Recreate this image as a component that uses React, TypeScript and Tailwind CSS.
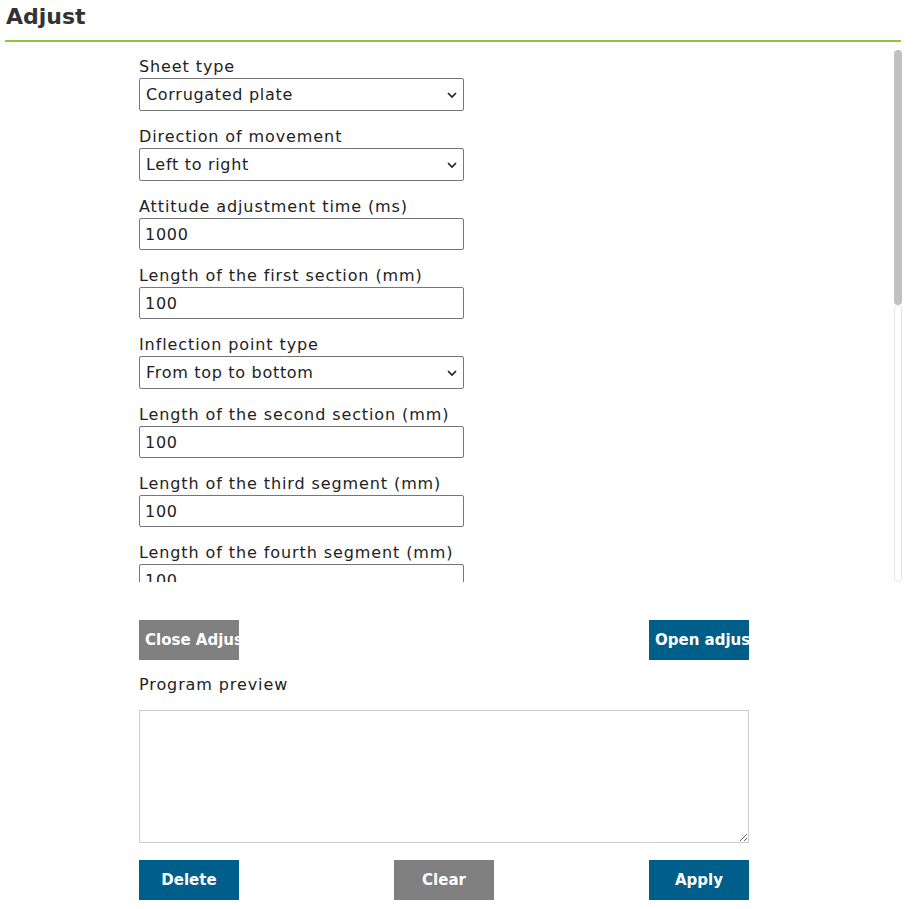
import { useState } from "react";

type Field = {
  label: string;
  kind: "select" | "input";
  value: string;
  options?: string[];
};

const fields: Field[] = [
  { label: "Sheet type", kind: "select", value: "Corrugated plate", options: ["Corrugated plate", "Flat plate"] },
  { label: "Direction of movement", kind: "select", value: "Left to right", options: ["Left to right", "Right to left"] },
  { label: "Attitude adjustment time (ms)", kind: "input", value: "1000" },
  { label: "Length of the first section (mm)", kind: "input", value: "100" },
  { label: "Inflection point type", kind: "select", value: "From top to bottom", options: ["From top to bottom", "From bottom to top"] },
  { label: "Length of the second section (mm)", kind: "input", value: "100" },
  { label: "Length of the third segment (mm)", kind: "input", value: "100" },
  { label: "Length of the fourth segment (mm)", kind: "input", value: "100" },
  { label: "Length of the fifth segment (mm)", kind: "input", value: "100" },
  { label: "Length of the sixth segment (mm)", kind: "input", value: "100" },
  { label: "Height of the wave (mm)", kind: "input", value: "20" },
  { label: "Spray speed (mm/s)", kind: "input", value: "300" },
  { label: "Spray gun height (mm)", kind: "input", value: "150" },
  { label: "Number of passes", kind: "input", value: "1" },
  { label: "Start delay (ms)", kind: "input", value: "0" },
  { label: "End delay (ms)", kind: "input", value: "0" },
];

const Chevron = () => (
  <svg
    className="pointer-events-none absolute right-[7px] top-1/2 -translate-y-1/2"
    width="10"
    height="6"
    viewBox="0 0 10 6"
    fill="none"
  >
    <path d="M1 1l4 4 4-4" stroke="#222" strokeWidth="1.7" />
  </svg>
);

export default function App() {
  const [values, setValues] = useState<string[]>(fields.map((f) => f.value));
  const [preview, setPreview] = useState("");

  const update = (i: number, v: string) =>
    setValues((prev) => prev.map((p, idx) => (idx === i ? v : p)));

  return (
    <div className="w-[916px] h-[909px] bg-white text-[#222] font-['DejaVu_Sans',Verdana,sans-serif] overflow-hidden">
      <div className="mx-[5px] w-[896px]">
        <h1 className="pl-[1px] h-[40px] pt-[2px] text-[22px] leading-[30px] font-bold text-[#333]">Adjust</h1>
        <div className="h-[2px] bg-[#8cc63f]" />
      </div>

      <div className="ml-[5px] mt-[8px] w-[897px] h-[532px] flex">
        <div className="flex-1 h-full overflow-hidden">
          <div className="pl-[134px] pt-[6px] flex flex-col gap-[15px]">
            {fields.map((f, i) => (
              <label key={f.label} className="flex flex-col w-[325px]">
                <span className="text-[16px] leading-[22px] tracking-[0.9px] whitespace-nowrap">{f.label}</span>
                {f.kind === "select" ? (
                  <div className="relative">
                    <select
                      value={values[i]}
                      onChange={(e) => update(i, e.target.value)}
                      className="appearance-none w-full h-[33px] border border-[#767676] rounded-[2px] pl-[6px] pr-[24px] text-[16px] tracking-[0.7px] bg-white text-[#222] outline-none"
                    >
                      {f.options?.map((o) => (
                        <option key={o}>{o}</option>
                      ))}
                    </select>
                    <Chevron />
                  </div>
                ) : (
                  <input
                    value={values[i]}
                    onChange={(e) => update(i, e.target.value)}
                    className="w-full h-[32px] border border-[#767676] rounded-[2px] px-[5px] text-[16px] tracking-[0.7px] bg-white text-[#222] outline-none"
                  />
                )}
              </label>
            ))}
          </div>
        </div>
        <div className="w-[8px] h-full flex flex-col">
          <div className="h-[255px] rounded-[4px] bg-[#c1c1c1]" />
          <div className="flex-1 rounded-[4px] border border-[#e4e4e4]" />
        </div>
      </div>

      <div className="ml-[139px] w-[610px] mt-[38px]">
        <div className="flex justify-between">
          <button className="w-[100px] h-[40px] bg-[#808080] text-white text-[15px] font-bold whitespace-nowrap overflow-hidden text-left pl-[6px]">
            Close Adjust
          </button>
          <button className="w-[100px] h-[40px] bg-[#005e8a] text-white text-[15px] font-bold whitespace-nowrap overflow-hidden text-left pl-[6px]">
            Open adjust
          </button>
        </div>
        <div className="mt-[14px] text-[16px] leading-[22px] tracking-[0.9px]">Program preview</div>
        <textarea
          value={preview}
          onChange={(e) => setPreview(e.target.value)}
          className="mt-[14px] block w-[610px] h-[133px] border border-[#cfcfcf] outline-none resize-y p-[4px] text-[15px]"
        />
        <div className="mt-[17px] flex justify-between">
          <button className="w-[100px] h-[40px] bg-[#005e8a] text-white text-[15px] font-bold">Delete</button>
          <button className="w-[100px] h-[40px] bg-[#808080] text-white text-[15px] font-bold">Clear</button>
          <button className="w-[100px] h-[40px] bg-[#005e8a] text-white text-[15px] font-bold">Apply</button>
        </div>
      </div>
    </div>
  );
}
